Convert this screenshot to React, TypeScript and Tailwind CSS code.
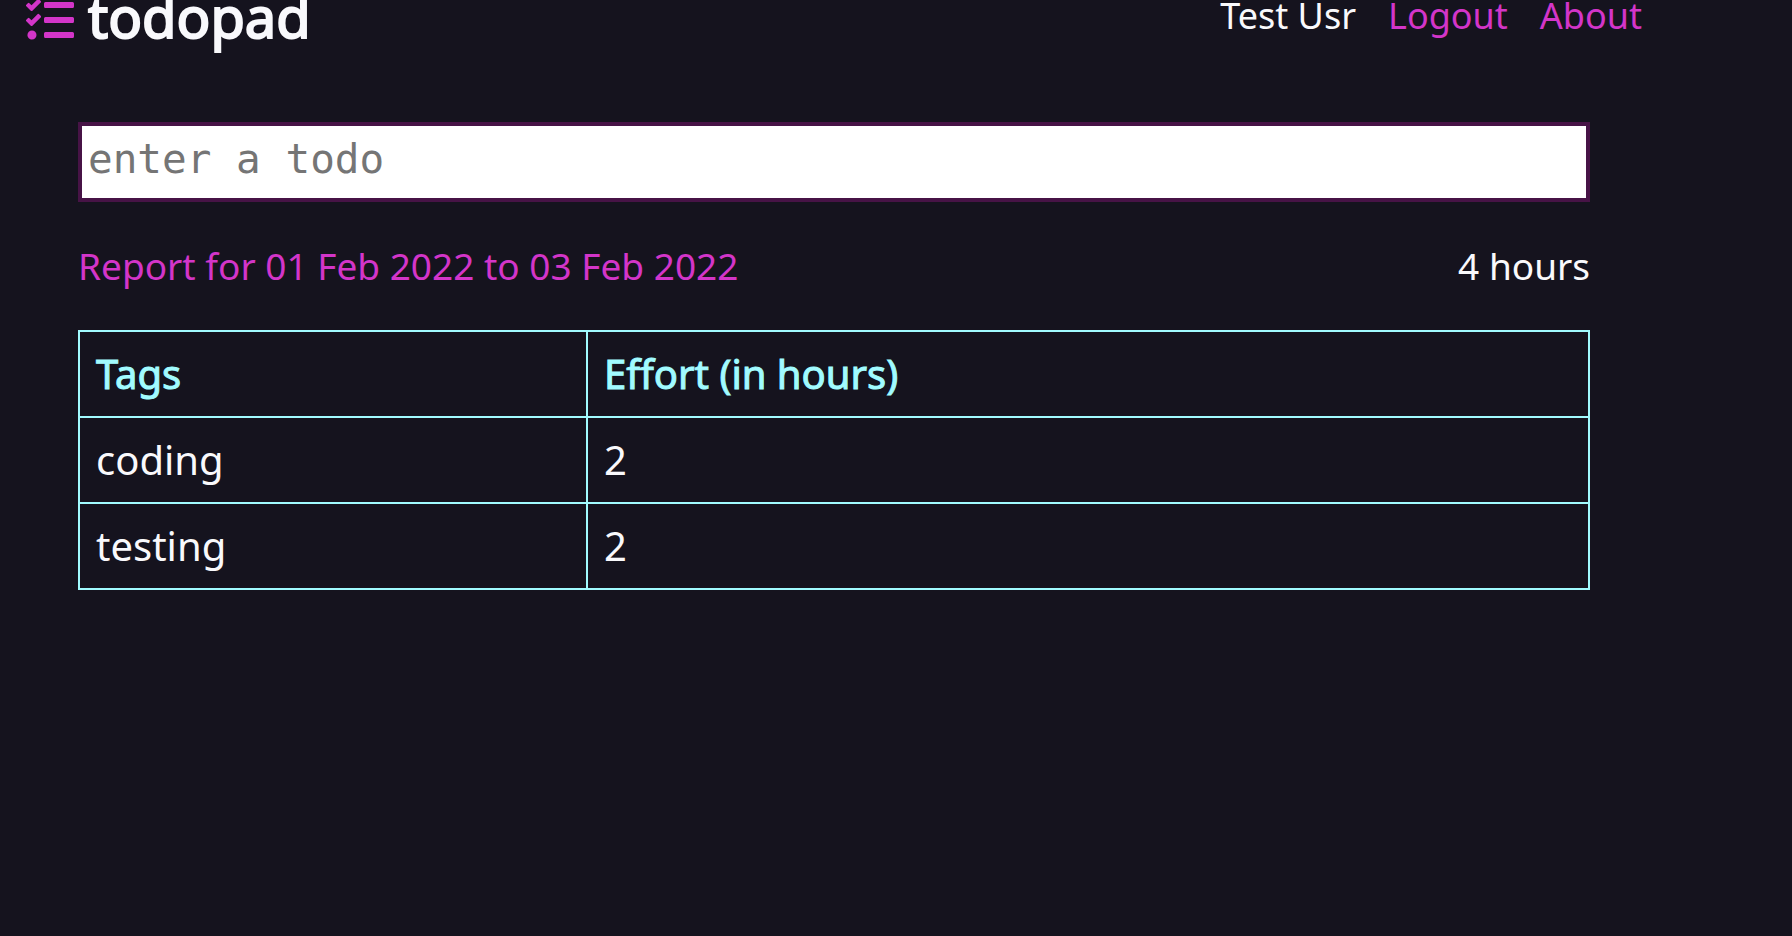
import { FaTasks } from "react-icons/fa";

const efforts = [
  { tag: "coding", hours: 2 },
  { tag: "testing", hours: 2 },
];

function Header() {
  return (
    <header className="flex h-8 items-center justify-between pl-[26px] pr-[150px]">
      <h1 className="flex items-center gap-[14px] text-[56px] leading-9 font-normal [-webkit-text-stroke:2px_currentColor]">
        <FaTasks className="mt-2 size-12 stroke-none text-[#d335c9]" aria-hidden="true" />
        todopad
      </h1>
      <nav className="flex gap-8 text-[36px] leading-8">
        <span>Test Usr</span>
        <a href="#logout" className="text-[#d335c9]">Logout</a>
        <a href="#about" className="text-[#d335c9]">About</a>
      </nav>
    </header>
  );
}

function EffortTable() {
  return (
    <table className="w-full border-collapse text-left text-[40px] leading-[60px]">
      <thead>
        <tr className="text-[#a1fbff]">
          <th className="w-[33.65%] border-2 border-[#a1fbff] px-4 py-3 font-normal [-webkit-text-stroke:1px_currentColor]">Tags</th>
          <th className="border-2 border-[#a1fbff] px-4 py-3 font-normal [-webkit-text-stroke:1px_currentColor]">Effort (in hours)</th>
        </tr>
      </thead>
      <tbody>
        {efforts.map(({ tag, hours }) => (
          <tr key={tag}>
            <td className="border-2 border-[#a1fbff] px-4 py-3">{tag}</td>
            <td className="border-2 border-[#a1fbff] px-4 py-3">{hours}</td>
          </tr>
        ))}
      </tbody>
    </table>
  );
}

export default function App() {
  return (
    <div className="flow-root min-h-screen overflow-hidden bg-[#15131e] font-['Noto_Sans',sans-serif] text-[#f9f9fc]">
      <Header />
      <main className="pt-[90px] pl-[78px] pr-[202px]">
        <input
          type="text"
          aria-label="New todo"
          placeholder="enter a todo"
          className="block h-20 w-full border-4 border-[#471346] bg-white px-[6px] pb-[6px] font-['DejaVu_Sans_Mono',monospace] text-[41px] text-black placeholder:text-[#757575]"
        />
        <div className="flex justify-between py-9 text-[37px] leading-[56px]">
          <a href="#report" className="text-[#d335c9]">Report for 01 Feb 2022 to 03 Feb 2022</a>
          <span>4 hours</span>
        </div>
        <EffortTable />
      </main>
    </div>
  );
}
